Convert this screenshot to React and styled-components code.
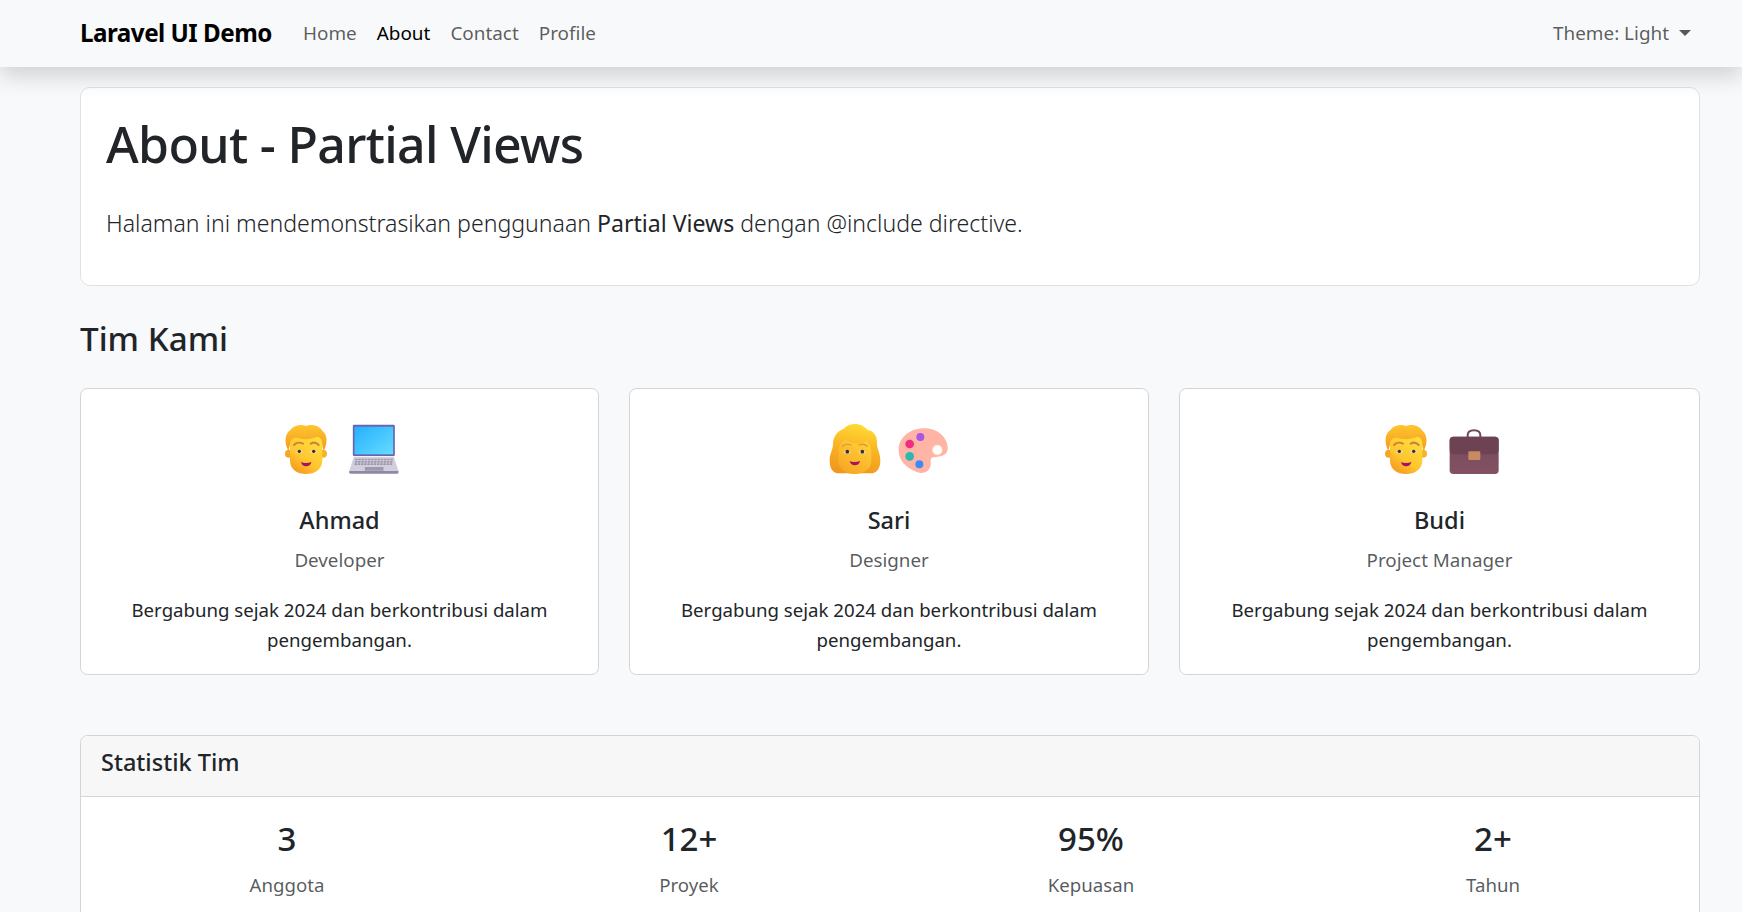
import styled, { createGlobalStyle } from 'styled-components';

const GlobalStyle = createGlobalStyle`
	html, body {
		margin: 0;
		height: 912px;
		overflow: hidden;
		background: #f8f9fa;
	}
	body {
		font-family: 'Noto Sans', 'Open Sans', sans-serif;
		font-size: 18.65px;
		line-height: 30px;
		color: #212529;
	}
	* {
		box-sizing: border-box;
	}
`;

function ManEmoji() {
	return (
		<EmojiSvg viewBox='54 36 162 162'>
			<defs>
				<linearGradient id='manHair' x1='0' y1='0' x2='0' y2='1'>
					<stop offset='0' stopColor='#ffc52e' />
					<stop offset='1' stopColor='#f29a1f' />
				</linearGradient>
				<linearGradient id='manFace' x1='0.8' y1='0' x2='0.2' y2='1'>
					<stop offset='0' stopColor='#ffdf3c' />
					<stop offset='0.6' stopColor='#ffc62f' />
					<stop offset='1' stopColor='#f7971d' />
				</linearGradient>
			</defs>
			<circle cx='84' cy='131' r='12' fill='#f5a623' />
			<circle cx='186' cy='131' r='12' fill='#f7b12a' />
			<path d='M82 122 C70 100 70 72 88 60 C98 46 120 42 135 48 C150 42 174 46 184 62 C200 74 200 100 188 122 L182 100 L88 100 Z' fill='url(#manHair)' />
			<path d='M87 96 C92 86 100 82 108 84 C130 90 150 88 170 80 C180 84 184 90 184 100 L184 152 C184 178 160 192 135 192 C110 192 87 178 87 152 Z' fill='url(#manFace)' />
			<path d='M99 105 C106 97 118 97 126 101' fill='none' stroke='#cf8040' strokeWidth='6' strokeLinecap='round' />
			<path d='M149 101 C156 97 166 97 173 105' fill='none' stroke='#cf8040' strokeWidth='6' strokeLinecap='round' />
			<path d='M103 127 C108 118 121 118 127 127 C121 130 108 130 103 127 Z' fill='#e3d8cc' />
			<path d='M146 127 C151 118 164 118 170 127 C164 130 151 130 146 127 Z' fill='#e3d8cc' />
			<circle cx='115' cy='124' r='5' fill='#3a2e2c' />
			<circle cx='158' cy='124' r='5' fill='#3a2e2c' />
			<path d='M120 156 C128 160 142 160 151 156 C149 166 142 169 135 169 C128 169 122 165 120 156 Z' fill='#a5125f' />
		</EmojiSvg>
	);
}

function WomanEmoji() {
	return (
		<EmojiSvg viewBox='55 36 162 162'>
			<defs>
				<linearGradient id='womanHair' x1='0.6' y1='0' x2='0.4' y2='1'>
					<stop offset='0' stopColor='#ffdc34' />
					<stop offset='0.5' stopColor='#f9b225' />
					<stop offset='1' stopColor='#ee981c' />
				</linearGradient>
				<linearGradient id='womanFace' x1='0.8' y1='0' x2='0.2' y2='1'>
					<stop offset='0' stopColor='#ffd338' />
					<stop offset='1' stopColor='#f8a522' />
				</linearGradient>
			</defs>
			<path d='M136 42 C152 42 166 50 174 60 C194 62 204 82 202 102 C202 116 212 130 212 152 C212 176 200 190 184 190 L88 190 C70 190 60 176 60 152 C60 130 70 120 70 102 C70 80 84 62 102 56 C112 46 124 42 136 42 Z' fill='url(#womanHair)' />
			<path d='M86 124 C86 110 94 96 106 88 C124 102 150 104 172 94 C180 104 185 114 185 128 L185 152 C185 176 162 192 135 192 C108 192 86 176 86 152 Z' fill='url(#womanFace)' />
			<path d='M98 109 C105 102 117 102 124 105' fill='none' stroke='#e59245' strokeWidth='4' strokeLinecap='round' />
			<path d='M148 105 C155 102 166 102 173 109' fill='none' stroke='#e59245' strokeWidth='4' strokeLinecap='round' />
			<path d='M101 128 C106 118 119 118 125 128 C119 131 106 131 101 128 Z' fill='#e3d8cc' />
			<path d='M146 128 C151 118 164 118 170 128 C164 131 151 131 146 128 Z' fill='#e3d8cc' />
			<circle cx='113' cy='125' r='5.5' fill='#3a2e2c' />
			<circle cx='158' cy='125' r='5.5' fill='#3a2e2c' />
			<path d='M120 153 C128 157 142 157 151 153 C149 163 142 166 135 166 C128 166 122 162 120 153 Z' fill='#a5125f' />
		</EmojiSvg>
	);
}

function LaptopEmoji() {
	const keys = [];
	for (let row = 0; row < 3; row++) {
		for (let col = 0; col < 12; col++) {
			keys.push(<rect key={`${row}-${col}`} x={285 + col * 9.6 - row} y={146 + row * 7} width='7.5' height='5' rx='1' fill='#9d97a8' />);
		}
	}
	return (
		<EmojiSvg viewBox='260.5 36 162 162'>
			<defs>
				<linearGradient id='laptopScreen' x1='0' y1='0' x2='1' y2='1'>
					<stop offset='0' stopColor='#25b0ff' />
					<stop offset='1' stopColor='#66dcff' />
				</linearGradient>
			</defs>
			<rect x='278' y='44' width='126' height='94' rx='4' fill='#6a62ad' />
			<rect x='283' y='50' width='116' height='83' fill='url(#laptopScreen)' />
			<path d='M281 140 L401 140 L415 184 L267 184 Z' fill='#d3cede' />
			{keys}
			<rect x='314' y='171' width='56' height='11' rx='1.5' fill='#9f99ad' />
			<path d='M267 183 L415 183 L415 187 C415 189 414 191 411 191 L271 191 C268 191 267 189 267 187 Z' fill='#8f87a3' />
		</EmojiSvg>
	);
}

function PaletteEmoji() {
	return (
		<EmojiSvg viewBox='260 36 162 162'>
			<path d='M340 55 C384 52 418 84 415 118 C413 140 388 140 372 142 C360 144 366 154 364 166 C361 186 340 194 322 186 C286 172 268 150 268 120 C268 84 298 58 340 55 Z' fill='#ffb4a6' />
			<circle cx='384' cy='120' r='15' fill='#fff' stroke='#ffd8a8' strokeWidth='2' />
			<circle cx='301' cy='102' r='13' fill='#f42a80' />
			<circle cx='333' cy='81' r='12' fill='#a855e8' />
			<circle cx='301' cy='139' r='13' fill='#2cb8ae' />
			<circle cx='330' cy='163' r='12' fill='#3d8cf5' />
		</EmojiSvg>
	);
}

function BriefcaseEmoji() {
	return (
		<EmojiSvg viewBox='260 36 162 162'>
			<defs>
				<linearGradient id='caseBody' x1='0' y1='0' x2='0' y2='1'>
					<stop offset='0' stopColor='#75495a' />
					<stop offset='1' stopColor='#835264' />
				</linearGradient>
			</defs>
			<path d='M322 84 L322 76 C322 66 330 61 341 61 C352 61 360 66 360 76 L360 84' fill='none' stroke='#6f4a58' strokeWidth='6' />
			<rect x='268' y='80' width='147' height='112' rx='11' fill='url(#caseBody)' />
			<path d='M268 91 C268 84 273 80 279 80 L404 80 C410 80 415 84 415 91 L415 120 C415 128 410 133 402 133 L281 133 C273 133 268 128 268 120 Z' fill='#6d4353' />
			<rect x='324' y='124' width='36' height='26' rx='4' fill='#c98a5f' />
		</EmojiSvg>
	);
}

const members = [
	{ name: 'Ahmad', role: 'Developer', Face: ManEmoji, Item: LaptopEmoji },
	{ name: 'Sari', role: 'Designer', Face: WomanEmoji, Item: PaletteEmoji },
	{ name: 'Budi', role: 'Project Manager', Face: ManEmoji, Item: BriefcaseEmoji },
];

const stats = [
	{ value: '3', label: 'Anggota' },
	{ value: '12+', label: 'Proyek' },
	{ value: '95%', label: 'Kepuasan' },
	{ value: '2+', label: 'Tahun' },
];

export default function App() {
	return (
		<>
			<GlobalStyle />
			<Navbar>
				<Brand>Laravel UI Demo</Brand>
				<NavLinks>
					<NavLink>Home</NavLink>
					<NavLink active>About</NavLink>
					<NavLink>Contact</NavLink>
					<NavLink>Profile</NavLink>
				</NavLinks>
				<ThemeToggle>
					Theme: Light
					<Caret />
				</ThemeToggle>
			</Navbar>

			<Main>
				<Hero>
					<HeroTitle>About - Partial Views</HeroTitle>
					<Lead>
						Halaman ini mendemonstrasikan penggunaan <LeadStrong>Partial Views</LeadStrong> dengan @include directive.
					</Lead>
				</Hero>

				<SectionTitle>Tim Kami</SectionTitle>

				<TeamGrid>
					{members.map((item) => (
						<MemberCard key={item.name}>
							<EmojiRow>
								<item.Face />
								<item.Item />
							</EmojiRow>
							<MemberName>{item.name}</MemberName>
							<MemberRole>{item.role}</MemberRole>
							<MemberText>Bergabung sejak 2024 dan berkontribusi dalam pengembangan.</MemberText>
						</MemberCard>
					))}
				</TeamGrid>

				<StatsCard>
					<StatsHeader>Statistik Tim</StatsHeader>
					<StatsBody>
						{stats.map((item) => (
							<Stat key={item.label}>
								<StatValue>{item.value}</StatValue>
								<StatLabel>{item.label}</StatLabel>
							</Stat>
						))}
					</StatsBody>
				</StatsCard>
			</Main>
		</>
	);
}

const Navbar = styled.nav`
	height: 67px;
	position: relative;
	z-index: 10;
	background: #f8f9fa;
	box-shadow: 0 10px 20px rgba(0, 0, 0, 0.15);
	display: flex;
	align-items: center;
	padding: 0 51px 2px 80px;
	font-size: 18.9px;
`;

const Brand = styled.div`
	font-size: 24.2px;
	font-weight: 700;
	letter-spacing: -0.5px;
	color: #000;
	width: 223px;
`;

const NavLinks = styled.div`
	display: flex;
	gap: 20px;
	flex: 1;
`;

const NavLink = styled.a`
	color: ${({ active }) => (active ? '#000' : 'rgba(0, 0, 0, 0.65)')};
`;

const ThemeToggle = styled.div`
	display: flex;
	align-items: center;
	color: rgba(0, 0, 0, 0.65);
`;

const Caret = styled.span`
	width: 0;
	height: 0;
	margin-left: 10px;
	border-top: 6px solid rgba(0, 0, 0, 0.65);
	border-left: 6px solid transparent;
	border-right: 6px solid transparent;
`;

const Main = styled.main`
	padding: 20px 42px 0 80px;
`;

const Hero = styled.section`
	height: 199px;
	background: #fff;
	border: 1px solid #dee2e6;
	border-radius: 10px;
	padding: 26px 25px;
`;

const HeroTitle = styled.h1`
	margin: 0 0 31px;
	font-size: 50px;
	font-weight: 500;
	letter-spacing: -0.67px;
	line-height: 60px;
`;

const Lead = styled.p`
	margin: 0;
	font-size: 23.1px;
	font-weight: 300;
	letter-spacing: -0.01px;
	line-height: 36px;
`;

const LeadStrong = styled.span`
	font-weight: 400;
`;

const SectionTitle = styled.h2`
	margin: 29px 0 25px;
	font-size: 33.2px;
	font-weight: 500;
	line-height: 48px;
`;

const TeamGrid = styled.div`
	display: grid;
	grid-template-columns: 519px 520px 1fr;
	gap: 30px;
`;

const MemberCard = styled.article`
	height: 287px;
	background: #fff;
	border: 1px solid #d2d4d6;
	border-radius: 7.5px;
	padding: 33px 25px 0;
	text-align: center;
`;

const EmojiRow = styled.div`
	display: flex;
	justify-content: center;
	gap: 14px;
`;

const EmojiSvg = styled.svg`
	display: block;
	width: 54px;
	height: 54px;
`;

const MemberName = styled.h5`
	margin: 29px 0 0;
	font-size: 23.5px;
	font-weight: 500;
	line-height: 30px;
`;

const MemberRole = styled.h6`
	margin: 10px 0 0;
	font-size: 18.8px;
	font-weight: 400;
	line-height: 30px;
	color: rgba(33, 37, 41, 0.75);
`;

const MemberText = styled.p`
	margin: 20px 0 0;
`;

const StatsCard = styled.section`
	margin-top: 60px;
	background: #fff;
	border: 1px solid #d2d4d6;
	border-radius: 7.5px;
	overflow: hidden;
`;

const StatsHeader = styled.div`
	height: 61px;
	display: flex;
	align-items: center;
	padding: 0 20px 8px;
	background: #f7f7f7;
	border-bottom: 1px solid #d2d4d6;
	font-size: 23.5px;
	font-weight: 500;
`;

const StatsBody = styled.div`
	display: grid;
	grid-template-columns: repeat(4, 1fr);
	padding: 21px 5px 25px;
	text-align: center;
`;

const Stat = styled.div`
	display: flex;
	flex-direction: column;
`;

const StatValue = styled.h3`
	margin: 0;
	font-size: 33px;
	font-weight: 500;
	line-height: 42px;
`;

const StatLabel = styled.p`
	margin: 10px 0 0;
	color: rgba(33, 37, 41, 0.75);
`;
